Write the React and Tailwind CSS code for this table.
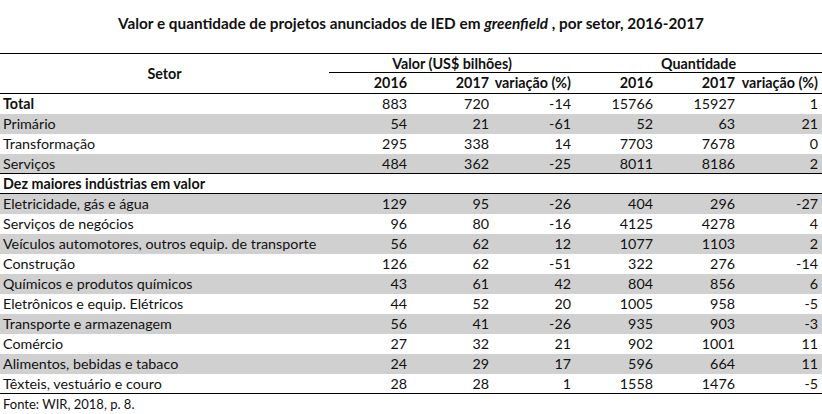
const cols = 'grid grid-cols-[329px_82px_82px_82px_82px_82px_83px]';

const top = [
  { name: 'Total', v: [883, 720, -14, 15766, 15927, 1], bold: true },
  { name: 'Primário', v: [54, 21, -61, 52, 63, 21], gray: true },
  { name: 'Transformação', v: [295, 338, 14, 7703, 7678, 0] },
  { name: 'Serviços', v: [484, 362, -25, 8011, 8186, 2], gray: true, line: true },
];

const industries = [
  { name: 'Eletricidade, gás e água', v: [129, 95, -26, 404, 296, -27], gray: true },
  { name: 'Serviços de negócios', v: [96, 80, -16, 4125, 4278, 4] },
  { name: 'Veículos automotores, outros equip. de transporte', v: [56, 62, 12, 1077, 1103, 2], gray: true },
  { name: 'Construção', v: [126, 62, -51, 322, 276, -14] },
  { name: 'Químicos e produtos químicos', v: [43, 61, 42, 804, 856, 6], gray: true },
  { name: 'Eletrônicos e equip. Elétricos', v: [44, 52, 20, 1005, 958, -5] },
  { name: 'Transporte e armazenagem', v: [56, 41, -26, 935, 903, -3], gray: true },
  { name: 'Comércio', v: [27, 32, 21, 902, 1001, 11] },
  { name: 'Alimentos, bebidas e tabaco', v: [24, 29, 17, 596, 664, 11], gray: true },
  { name: 'Têxteis, vestuário e couro', v: [28, 28, 1, 1558, 1476, -5], line: true },
];

function Row({ row }) {
  return (
    <div
      className={`${cols} h-5 items-center ${row.gray ? 'bg-[#d0d0d0]' : ''} ${
        row.line ? 'border-b border-black' : ''
      }`}
    >
      <div className={`pl-[3px] whitespace-nowrap ${row.bold ? 'font-bold' : ''}`}>{row.name}</div>
      {row.v.map((n, i) => (
        <div key={i} className="pr-[4px] text-right">
          {n}
        </div>
      ))}
    </div>
  );
}

export default function App() {
  return (
    <div className="w-[822px] h-[414px] bg-white text-[#111] font-['Lato',sans-serif] text-[14.3px] leading-[20px]">
      <div className="h-[53px] pt-[13px] text-center font-bold text-[15.3px] leading-[20px]">
        Valor e quantidade de projetos anunciados de IED em <i>greenfield</i> , por setor, 2016-2017
      </div>

      <div className="border-t border-b border-black h-[41px] flex font-bold">
        <div className="w-[329px] flex items-center justify-center">Setor</div>
        <div className="flex-1 flex flex-col">
          <div className="h-[19px] border-b border-black flex leading-[19px]">
            <div className="w-[246px] text-center">Valor (US$ bilhões)</div>
            <div className="flex-1 text-center">Quantidade</div>
          </div>
          <div className="h-[20px] grid grid-cols-[82px_82px_82px_82px_82px_83px] leading-[19px]">
            <div className="pr-[4px] text-right">2016</div>
            <div className="pr-[4px] text-right">2017</div>
            <div className="pr-[4px] text-right">variação (%)</div>
            <div className="pr-[4px] text-right">2016</div>
            <div className="pr-[4px] text-right">2017</div>
            <div className="pr-[4px] text-right">variação (%)</div>
          </div>
        </div>
      </div>

      {top.map((r) => (
        <Row key={r.name} row={r} />
      ))}

      <div className="h-5 border-b border-black font-bold pl-[3px] flex items-center">
        Dez maiores indústrias em valor
      </div>

      {industries.map((r) => (
        <Row key={r.name} row={r} />
      ))}

      <div className="pl-[3px] pt-[2px] text-[13px] leading-[16px]">Fonte: WIR, 2018, p. 8.</div>
    </div>
  );
}
